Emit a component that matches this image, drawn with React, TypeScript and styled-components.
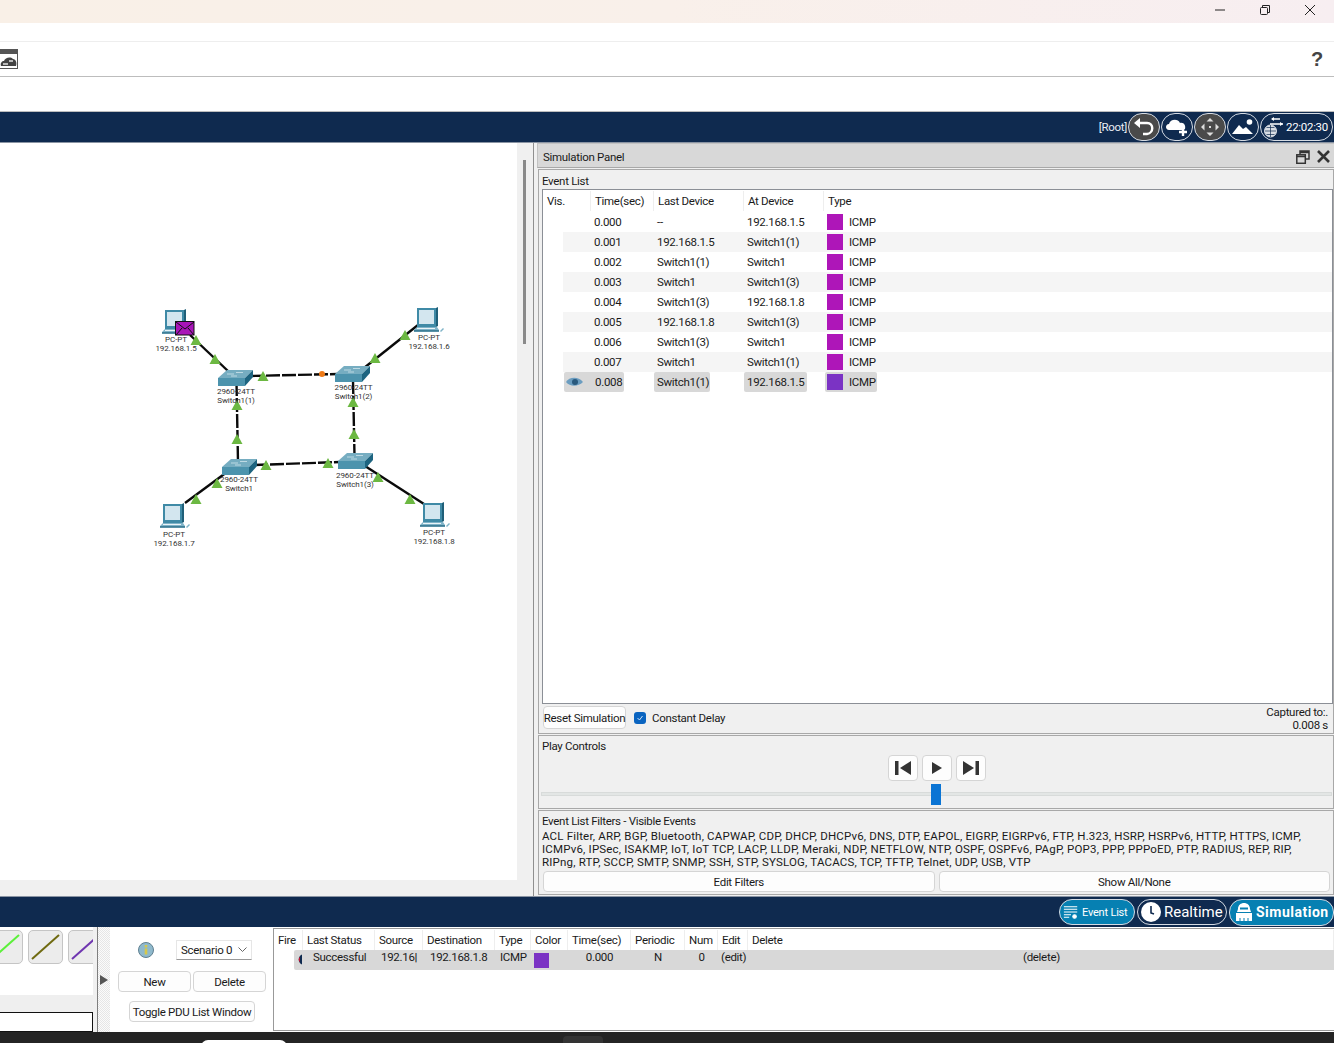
import React from "react";
import styled, { createGlobalStyle } from "styled-components";

const Global = createGlobalStyle`
  html, body { margin: 0; padding: 0; background: #fff; }
  body { font-family: Roboto, "Liberation Sans", Arial, sans-serif; font-size: 11.5px; letter-spacing: -.3px; color: #1a1a1a; overflow: hidden; }
  * { box-sizing: border-box; }
`;

const Page = styled.div`
  width: 1334px; height: 1043px; display: flex; flex-direction: column; overflow: hidden; background: #fff;
`;
const TitleBar = styled.div`
  height: 23px; flex: none; display: flex; justify-content: flex-end; align-items: center; padding: 0 18px 3px 0; gap: 33px;
  background: linear-gradient(90deg, #f9f0e7 0%, #f9f0ea 50%, #f7eef1 100%);
`;
const MenuGap = styled.div`height: 19px; flex: none; border-bottom: 1px solid #eeeeee;`;
const ToolRow = styled.div`
  height: 35px; flex: none; display: flex; justify-content: space-between; align-items: center; padding-right: 11px; border-bottom: 1px solid #bdbdbd;
`;
const CloudTool = styled.div`
  width: 18px; height: 20px; border: 1px solid #555; border-left: 0; border-top-width: 5px; background: #fff; display: flex; align-items: center;
`;
const Help = styled.span`font: bold 20px "Liberation Sans", sans-serif; color: #444;`;
const Spacer = styled.div`height: 35px; flex: none; border-bottom: 1px solid #bdbdbd;`;
const NavBar = styled.div`
  height: 31px; flex: none; background: #0f2a4f; display: flex; justify-content: flex-end; align-items: center; gap: 1px; padding-right: 1px;
  border-bottom: 1px solid #8a94a3; color: #fff;
`;
const RootText = styled.span`color: #e8edf3;`;
const RoundBtn = styled.div<{ $dark?: boolean }>`
  width: 32px; height: 28px; border-radius: 14px; border: 1px solid #d5dbe3; background: ${p => p.$dark ? "#4a4a4a" : "#0f2a4f"};
  display: flex; align-items: center; justify-content: center;
`;
const ClockBtn = styled(RoundBtn)`
  width: 73px; justify-content: flex-start; padding-left: 2px; color: #fff; gap: 1px;
`;

const Main = styled.div`flex: none; height: 753px; display: flex; background: #f0f0f0;`;
const Canvas = styled.div`width: 517px; height: 737px; position: relative; background: #fff; flex: none;`;
const Diagram = styled.svg`position: absolute; left: 0; top: 0;`;
const NodeLabel = styled.div<{ $x: number; $y: number }>`
  position: absolute; left: ${p => p.$x}px; top: ${p => p.$y - 143}px; transform: translateX(-50%);
  font-size: 8px; line-height: 9px; letter-spacing: -.1px; text-align: center; white-space: nowrap; color: #333;
`;
const VScroll = styled.div`width: 16px; flex: none; display: flex; justify-content: center; padding: 17px 1px 0 0; background: #f0f0f0;`;
const VThumb = styled.div`width: 3px; height: 184px; background: #8a8a8a;`;

const Panel = styled.div`width: 801px; flex: none; display: flex; flex-direction: column; border-left: 1px solid #8f8f8f; padding-left: 3px; background: #f0f0f0;`;
const PanelTitle = styled.div`
  height: 25px; flex: none; background: #d8d8d8; border: 1px solid #c2c2c2; border-bottom-color: #a8a8a8; border-right: 0; display: flex; align-items: center; justify-content: space-between; padding: 2px 4px 0 5px; margin-bottom: 1px;
`;
const TitleIcons = styled.div`display: flex; align-items: center; gap: 7px;`;
const Group = styled.div<{ $h: number }>`
  height: ${p => p.$h}px; margin: 0 0 1px 1px; flex: none; border: 1px solid #a8a8a8; background: #f0f0f0; display: flex; flex-direction: column;
`;
const GroupLabel = styled.div<{ $top: number }>`flex: none; padding: ${p => p.$top}px 0 0 3px; height: 19px; line-height: 13px;`;
const ListBox = styled.div`margin-left: 3px; height: 515px; border: 1px solid #8b8f96; background: #fff; flex: none;`;
const HeadRow = styled.div`
  height: 22px; display: grid; grid-template-columns: 48px 63px 90px 80px 1fr; align-items: center;
`;
const HeadCell = styled.div`
  height: 20px; line-height: 21px; padding-left: 4px; border-right: 1px solid #eeeeee;
  &:last-child { border-right: 0; }
`;
const EventRow = styled.div<{ $alt: boolean }>`
  height: 20px; margin-left: 20px; display: grid; grid-template-columns: 90px 90px 80px 1fr; background: ${p => p.$alt ? "#f5f5f5" : "#fff"};
`;
const ECell = styled.div`display: flex; align-items: center; padding-left: 4px; height: 20px;`;
const TypeCell = styled(ECell)`padding-left: 3px;`;
const TimeCell = styled(ECell)<{ $sel: boolean }>`padding-left: ${p => p.$sel ? 1 : 31}px;`;
const Pill = styled.div<{ $w: number }>`
  width: ${p => p.$w}px; height: 20px; background: #d8d8d8; border-radius: 2px; display: flex; align-items: center; padding-left: 3px; margin-left: -3px;
`;
const TimePill = styled(Pill)`margin-left: 0; padding-left: 2px; gap: 12px;`;
const TypeBox = styled.div<{ $sel?: boolean }>`
  display: flex; align-items: center; height: 20px; padding: 0 1px 0 ${p => p.$sel ? 2 : 1}px; margin-left: ${p => p.$sel ? -1 : 0}px; gap: 6px; background: ${p => p.$sel ? "#d8d8d8" : "transparent"}; border-radius: 2px;
`;
const Swatch = styled.span<{ $c: string; $s: number }>`width: ${p => p.$s}px; height: ${p => p.$s}px; background: ${p => p.$c}; flex: none; display: block;`;
const ListFoot = styled.div`flex: 1; display: flex; align-items: center; justify-content: space-between; padding: 0 5px 0 4px;`;
const FootLeft = styled.div`display: flex; align-items: center; padding-bottom: 2px;`;
const Btn = styled.div`
  background: #fdfdfd; border: 1px solid #d5d5d5; border-radius: 4px; display: flex; align-items: center; justify-content: center; white-space: nowrap; color: #1a1a1a;
`;
const ResetBtn = styled(Btn)`width: 83px; height: 23px; margin-right: 8px;`;
const Check = styled.div`
  width: 12px; height: 12px; border-radius: 3px; background: #0a64c0; margin-right: 6px; display: flex; align-items: center; justify-content: center;
`;
const Captured = styled.div`text-align: right; line-height: 13px;`;
const PlayRow = styled.div`display: flex; justify-content: center; gap: 4px; padding-left: 2px;`;
const PlayBtn = styled(Btn)`width: 30px; height: 26px;`;
const Slider = styled.div`margin: 11px 1px 0 2px; height: 4px; background: #e3e6e5; border: 1px solid #d8dbda; position: relative;`;
const Thumb = styled.div`position: absolute; left: 389px; top: -9px; width: 10px; height: 21px; background: #0a74d4;`;
const FilterText = styled.div`padding-left: 3px; line-height: 13px; white-space: nowrap; letter-spacing: .18px;`;
const FilterBtns = styled.div`display: flex; gap: 4px; padding: 2px 3px 0 4px;`;
const FilterBtn = styled(Btn)`flex: 1; height: 21px;`;

const ModeBar = styled.div`
  height: 31px; flex: none; background: #0f2a4f; border-top: 1px solid #8a94a3; display: flex; justify-content: flex-end; align-items: center; gap: 2px;
`;
const ModeBtn = styled.div<{ $w: number; $bg: string; $size: number; $bold?: boolean; $ls: number }>`
  width: ${p => p.$w}px; height: ${p => p.$bold ? 27 : 26}px; border-radius: 13px; border: 1px solid #d5dbe3; background: ${p => p.$bg}; color: #fff;
  font-size: ${p => p.$size}px; font-weight: ${p => p.$bold ? 700 : 400}; letter-spacing: ${p => p.$ls}px; display: flex; align-items: center; gap: ${p => p.$bold ? 1 : 3}px; padding-left: 3px; white-space: nowrap;
`;

const Bottom = styled.div`flex: none; display: flex; background: #fff; height: 105px;`;
const Tools = styled.div`width: 93px; flex: none; display: flex; flex-direction: column; overflow: hidden;`;
const CableRow = styled.div`height: 68px; flex: none; display: flex; gap: 5px; padding-top: 3px; margin-left: -12px;`;
const CableBtn = styled.div`
  width: 35px; height: 34px; flex: none; border-radius: 5px; border: 1px solid #c5c5c5; background: #ececec;
`;
const GrayStrip = styled.div`height: 17px; background: #efefef; flex: none;`;
const InputBox = styled.div`height: 20px; border: 1px solid #111; border-left: 0; background: #fff; flex: none;`;
const Divider = styled.div`width: 5px; flex: none; border-right: 1px solid #7e7e7e; background: #f0f0f0;`;
const Collapse = styled.div`
  width: 12px; flex: none; display: flex; align-items: center; justify-content: flex-start; padding-left: 2px;
  background: repeating-conic-gradient(#e6e6e6 0 25%, #fbfbfb 0 50%) 0 0 / 2px 2px;
`;
const Scenario = styled.div`width: 158px; flex: none; padding: 8px 7px 0 3px; background: #fff; margin-left: 5px;`;
const ScenTop = styled.div`display: flex; align-items: center; height: 30px; padding-left: 20px;`;
const Select = styled.div`
  margin-left: 22px; width: 76px; height: 20px; background: #fff; border: 1px solid #e6e6e6; border-bottom: 1px solid #999; display: flex; align-items: center; padding: 0 4px; justify-content: space-between;
`;
const ScenBtns = styled.div`display: flex; gap: 2px; margin-top: 6px;`;
const ScenBtn = styled(Btn)`width: 73px; height: 21px;`;
const ToggleBtn = styled(Btn)`width: 126px; height: 21px; margin: 9px 0 0 11px;`;
const PduBox = styled.div`flex: 1; margin-top: 1px; border: 1px solid #999; border-right: 0; height: 103px; background: #fff;`;
const PduHead = styled.div`
  display: grid; grid-template-columns: 29px 72px 48px 72px 36px 37px 63px 54px 33px 30px 1fr; height: 21px; align-items: center;
`;
const PduHeadCell = styled.div`height: 20px; line-height: 21px; padding-left: 4px; border-right: 1px solid #eeeeee; white-space: nowrap;`;
const PduRow = styled.div`
  margin-left: 20px; height: 20px; background: #d8d8d8; display: grid; grid-template-columns: 19px 68px 49px 70px 34px 34px 63px 54px 33px 30px 1fr; border-radius: 2px 0 0 2px;
`;
const PduCell = styled.div<{ $c?: boolean; $pl?: number }>`
  height: 14px; line-height: 14px; white-space: nowrap; overflow: hidden; text-align: ${p => p.$c ? "center" : "left"}; padding-left: ${p => p.$pl ?? 0}px;
`;
const FireCell = styled.div`padding: 4px 0 0 1px;`;
const SwatchCell = styled.div`padding-top: 3px;`;
const Taskbar = styled.div`height: 11px; flex: none; background: #242424; position: relative;`;
const TaskPill = styled.div`position: absolute; left: 201px; top: 8px; width: 86px; height: 14px; background: #fff; border-radius: 8px;`;
const TaskIcon = styled.div`position: absolute; left: 563px; top: 4px; width: 40px; height: 14px; background: #333; border-radius: 4px;`;

const events: [string, string, string][] = [
  ["0.000", "--", "192.168.1.5"],
  ["0.001", "192.168.1.5", "Switch1(1)"],
  ["0.002", "Switch1(1)", "Switch1"],
  ["0.003", "Switch1", "Switch1(3)"],
  ["0.004", "Switch1(3)", "192.168.1.8"],
  ["0.005", "192.168.1.8", "Switch1(3)"],
  ["0.006", "Switch1(3)", "Switch1"],
  ["0.007", "Switch1", "Switch1(1)"],
  ["0.008", "Switch1(1)", "192.168.1.5"],
];

const Pc = ({ x, y }: { x: number; y: number }) => (
  <g transform={`translate(${x} ${y})`}>
    <path d="M2 1h19v19H2z" fill="#3f8aa6" />
    <path d="M21 1l2-1v19l-2 1z" fill="#1f5f78" />
    <rect x="4" y="3" width="15" height="14" fill="#d3e6ef" />
    <path d="M2 20h20l2 3v1.500H-1V23z" fill="#7fb3c8" />
    <path d="M-1 23h25v1.800H-1z" fill="#3f7f98" />
    <path d="M2 21h18v1H2z" fill="#eaf4f8" />
    <path d="M25 24l3-3 1 1-3 3z" fill="#7fb3c8" />
  </g>
);
const Sw = ({ x, y }: { x: number; y: number }) => (
  <g transform={`translate(${x} ${y})`}>
    <path d="M0 9L9 1h26l-8 8z" fill="#76adc1" />
    <path d="M0 9h27v8H0z" fill="#4c93ad" />
    <path d="M27 9l8-8v7l-8 9z" fill="#1d6480" />
    <path d="M9 5h7M18 3.500h7M13 7h6" stroke="#cfe4ec" strokeWidth=".8" />
  </g>
);
const Tri = ({ x, y }: { x: number; y: number }) => (
  <path d={`M${x} ${y - 5}l5.500 10h-11z`} fill="#6cb842" />
);

const Network = () => (
  <Diagram width="517" height="737" viewBox="0 143 517 737">
    <g stroke="#0a0a0a" strokeWidth="2.400" fill="none">
      <path d="M190 335L228 371" />
      <path d="M418 325L364 368" />
      <path d="M185 503L227 472" />
      <path d="M365 466L424 504" />
      <path d="M250 376L338 374" strokeDasharray="14 2" />
      <path d="M254 465L340 462" strokeDasharray="14 2" />
      <path d="M236.500 382L238 462" strokeDasharray="14 2" />
      <path d="M353 380L354.500 456" strokeDasharray="14 2" />
    </g>
    <Pc x={163} y={309} />
    <Pc x={415} y={307} />
    <Pc x={161} y={503} />
    <Pc x={421} y={502} />
    <Sw x={218} y={369} />
    <Sw x={335} y={365} />
    <Sw x={222} y={458} />
    <Sw x={338} y={452} />
    <rect x="175.500" y="321.500" width="18.500" height="13.500" fill="#a815b8" stroke="#111" />
    <path d="M176 322l9 7 9-7M176 335l6-7M194 335l-6-7" stroke="#111" fill="none" strokeWidth="1" />
    {[[196,340],[215,359],[263,376],[405,335],[375,358],[237,405],[353,402],[237,439],[354,434],[266,465],[328,463],[196,499],[217,483],[378,477],[410,499]].map(([x, y]) => <Tri key={`${x}-${y}`} x={x} y={y} />)}
    <circle cx="322" cy="374" r="3" fill="#ee7a17" />
  </Diagram>
);

const labels: [number, number, string, string][] = [
  [176, 335, "PC-PT", "192.168.1.5"],
  [429, 333, "PC-PT", "192.168.1.6"],
  [236, 387, "2960-24TT", "Switch1(1)"],
  [353.500, 383, "2960-24TT", "Switch1(2)"],
  [239, 475, "2960-24TT", "Switch1"],
  [355, 471, "2960-24TT", "Switch1(3)"],
  [174, 530, "PC-PT", "192.168.1.7"],
  [434, 528, "PC-PT", "192.168.1.8"],
];

export default function App() {
  return (
    <Page>
      <Global />
      <TitleBar>
        <svg width="12" height="12" viewBox="0 0 12 12"><path d="M1 6h10" stroke="#222" /></svg>
        <svg width="12" height="12" viewBox="0 0 12 12" fill="none" stroke="#222"><rect x="1.500" y="3.500" width="7" height="7" rx="1" /><path d="M3.500 3V1.500h7v7H9" /></svg>
        <svg width="12" height="12" viewBox="0 0 12 12"><path d="M1 1l10 10M11 1L1 11" stroke="#222" /></svg>
      </TitleBar>
      <MenuGap />
      <ToolRow>
        <CloudTool>
          <svg width="17" height="12" viewBox="0 0 17 12"><path d="M1 11c-1-3 1-5 3-5 1-3 6-5 9-2 3 0 4 4 3 7z" fill="#444" /><path d="M3 9h5M9 6h4" stroke="#bbb" strokeWidth="2" /></svg>
        </CloudTool>
        <Help>?</Help>
      </ToolRow>
      <Spacer />
      <NavBar>
        <RootText>[Root]</RootText>
        <RoundBtn $dark>
          <svg width="24" height="22" viewBox="0 0 24 22" fill="none"><path d="M8 2L2 7l6 5z" fill="#fff" /><path d="M6 7h9c7 0 7 10 0 11h-4" stroke="#fff" strokeWidth="2.400" /></svg>
        </RoundBtn>
        <RoundBtn>
          <svg width="24" height="22" viewBox="0 0 24 22"><path d="M4 14c-4 0-4-6 0-6 1-5 9-6 11-1 4-1 6 3 5 6l-2 1z" fill="#fff" /><path d="M18 12v8M14 16h8" stroke="#fff" strokeWidth="2.400" /></svg>
        </RoundBtn>
        <RoundBtn $dark>
          <svg width="22" height="22" viewBox="0 0 22 22" fill="#ddd"><path d="M11 2l3.500 3.500h-7zM11 20l-3.500-3.500h7zM2 11l3.500-3.500v7zM20 11l-3.500 3.500v-7z" /><rect x="10" y="10" width="2" height="2" /></svg>
        </RoundBtn>
        <RoundBtn>
          <svg width="24" height="20" viewBox="0 0 24 20" fill="#fff"><circle cx="18.500" cy="5" r="2.800" /><path d="M1 17l7-9 4 4 3-2 7 7z" /></svg>
        </RoundBtn>
        <ClockBtn>
          <svg width="22" height="24" viewBox="0 0 22 24" fill="none" stroke="#fff"><circle cx="7.500" cy="16" r="6" fill="#d8dde4" stroke="#d8dde4" /><path d="M2 16h11M7.500 10v12M3.500 12.500h8M3.500 19.500h8" stroke="#0f2a4f" strokeWidth=".7" /><path d="M9 4h8M7 9h13" strokeWidth="1.500" /><path d="M11 2L8 4l3 2zM17 7l3 2-3 2z" fill="#fff" stroke="none" /></svg>
          <span>22:02:30</span>
        </ClockBtn>
      </NavBar>
      <Main>
        <div>
          <Canvas>
            <Network />
            {labels.map(([x, y, a, b]) => (
              <NodeLabel key={b} $x={x} $y={y}>{a}<br />{b}</NodeLabel>
            ))}
          </Canvas>
        </div>
        <VScroll><VThumb /></VScroll>
        <Panel>
          <PanelTitle>
            <span>Simulation Panel</span>
            <TitleIcons>
              <svg width="14" height="14" viewBox="0 0 14 14" fill="none" stroke="#333" strokeWidth="1.500"><rect x=".8" y="4.800" width="8.500" height="8.500" /><path d="M4 4.500V1h9v8h-3.500M4 2.500h9" /><path d="M.8 6.500h8.500" /></svg>
              <svg width="13" height="13" viewBox="0 0 13 13"><path d="M1 1l11 11M12 1L1 12" stroke="#333" strokeWidth="2.600" /></svg>
            </TitleIcons>
          </PanelTitle>
          <Group $h={565}>
            <GroupLabel $top={5}>Event List</GroupLabel>
            <ListBox>
              <HeadRow>
                <HeadCell>Vis.</HeadCell>
                <HeadCell>Time(sec)</HeadCell>
                <HeadCell>Last Device</HeadCell>
                <HeadCell>At Device</HeadCell>
                <HeadCell>Type</HeadCell>
              </HeadRow>
              {events.map(([t, l, a], i) => {
                const sel = i === 8;
                return (
                  <EventRow key={t} $alt={i % 2 === 1}>
                    <TimeCell $sel={sel}>
                      {sel ? (
                        <TimePill $w={60}>
                          <svg width="17" height="10" viewBox="0 0 17 10"><path d="M0 5C3 0 12-1 17 5 12 10 4 10 0 5z" fill="#6b9dc0" /><circle cx="9" cy="5" r="3" fill="#29597d" /></svg>
                          <span>{t}</span>
                        </TimePill>
                      ) : t}
                    </TimeCell>
                    <ECell>{sel ? <Pill $w={56}>{l}</Pill> : l}</ECell>
                    <ECell>{sel ? <Pill $w={63}>{a}</Pill> : a}</ECell>
                    <TypeCell>
                      <TypeBox $sel={sel}>
                        <Swatch $c={sel ? "#7b33c4" : "#ae16b8"} $s={16} />
                        <span>ICMP</span>
                      </TypeBox>
                    </TypeCell>
                  </EventRow>
                );
              })}
            </ListBox>
            <ListFoot>
              <FootLeft>
                <ResetBtn>Reset Simulation</ResetBtn>
                <Check><svg width="8" height="8" viewBox="0 0 8 8"><path d="M1.500 4l2 2 3-4" stroke="#cfe3f7" fill="none" /></svg></Check>
                <span>Constant Delay</span>
              </FootLeft>
              <Captured>Captured to:.<br />0.008 s</Captured>
            </ListFoot>
          </Group>
          <Group $h={74}>
            <GroupLabel $top={4}>Play Controls</GroupLabel>
            <PlayRow>
              <PlayBtn><svg width="16" height="14" viewBox="0 0 16 14" fill="#333"><rect x="0" y="0" width="3.500" height="14" /><path d="M16 0v14L5 7z" /></svg></PlayBtn>
              <PlayBtn><svg width="12" height="12" viewBox="0 0 12 12" fill="#333"><path d="M1 0l10 6-10 6z" /></svg></PlayBtn>
              <PlayBtn><svg width="16" height="14" viewBox="0 0 16 14" fill="#333"><path d="M0 0v14L11 7z" /><rect x="12.500" y="0" width="3.500" height="14" /></svg></PlayBtn>
            </PlayRow>
            <Slider><Thumb /></Slider>
          </Group>
          <Group $h={85}>
            <GroupLabel $top={4}>Event List Filters - Visible Events</GroupLabel>
            <FilterText>
              ACL Filter, ARP, BGP, Bluetooth, CAPWAP, CDP, DHCP, DHCPv6, DNS, DTP, EAPOL, EIGRP, EIGRPv6, FTP, H.323, HSRP, HSRPv6, HTTP, HTTPS, ICMP,<br />
              ICMPv6, IPSec, ISAKMP, IoT, IoT TCP, LACP, LLDP, Meraki, NDP, NETFLOW, NTP, OSPF, OSPFv6, PAgP, POP3, PPP, PPPoED, PTP, RADIUS, REP, RIP,<br />
              RIPng, RTP, SCCP, SMTP, SNMP, SSH, STP, SYSLOG, TACACS, TCP, TFTP, Telnet, UDP, USB, VTP
            </FilterText>
            <FilterBtns>
              <FilterBtn>Edit Filters</FilterBtn>
              <FilterBtn>Show All/None</FilterBtn>
            </FilterBtns>
          </Group>
        </Panel>
      </Main>
      <ModeBar>
        <ModeBtn $w={76} $bg="#0680b2" $size={11} $ls={-0.2}>
          <svg width="16" height="16" viewBox="0 0 18 16" stroke="#fff" strokeWidth="1.200"><path d="M1 2h15M1 5h15M1 8h15M1 11h8M1 14h6" /><circle cx="13" cy="13" r="2" fill="#fff" /></svg>
          <span>Event List</span>
        </ModeBtn>
        <ModeBtn $w={90} $bg="#0f2a4f" $size={15} $ls={0}>
          <svg width="20" height="20" viewBox="0 0 20 20"><circle cx="10" cy="10" r="10" fill="#fff" /><path d="M10 4v7l3 1" stroke="#0f2a4f" strokeWidth="1.600" fill="none" /></svg>
          <span>Realtime</span>
        </ModeBtn>
        <ModeBtn $w={105} $bg="#0680b2" $size={14} $bold $ls={0.5}>
          <svg width="22" height="22" viewBox="0 0 22 22" fill="#fff"><path d="M5 8c0-8 12-8 12 0l1 3H4z" /><path d="M3 12h16v8H3z" /><path d="M7 6.500h8v2H7z" fill="#0680b2" /><path d="M7 20v-3M11 20v-3M15 20v-3" stroke="#0680b2" /></svg>
          <span>Simulation</span>
        </ModeBtn>
      </ModeBar>
      <Bottom>
        <Tools>
          <CableRow>
            <CableBtn><svg width="33" height="32" viewBox="0 0 33 32"><path d="M3 28L30 4" stroke="#5cf03a" strokeWidth="2" /></svg></CableBtn>
            <CableBtn><svg width="33" height="32" viewBox="0 0 33 32"><path d="M3 28L30 4" stroke="#6f6a10" strokeWidth="2" /></svg></CableBtn>
            <CableBtn><svg width="33" height="32" viewBox="0 0 33 32"><path d="M3 28L30 4" stroke="#6f35b0" strokeWidth="2" /></svg></CableBtn>
          </CableRow>
          <GrayStrip />
          <InputBox />
        </Tools>
        <Divider />
        <Collapse><svg width="8" height="12" viewBox="0 0 8 12"><path d="M0 1l8 5-8 5z" fill="#555" /></svg></Collapse>
        <Scenario>
          <ScenTop>
            <svg width="16" height="16" viewBox="0 0 16 16"><circle cx="8" cy="8" r="7.500" fill="#8fb9cc" stroke="#5f7f90" /><rect x="6.700" y="6.500" width="2.600" height="6" fill="#d6c84a" /><rect x="6.700" y="3" width="2.600" height="2.400" fill="#d6c84a" /></svg>
            <Select><span>Scenario 0</span><svg width="9" height="6" viewBox="0 0 9 6"><path d="M.5 .5L4.500 4.500 8.500 .5" stroke="#666" fill="none" /></svg></Select>
          </ScenTop>
          <ScenBtns><ScenBtn>New</ScenBtn><ScenBtn>Delete</ScenBtn></ScenBtns>
          <ToggleBtn>Toggle PDU List Window</ToggleBtn>
        </Scenario>
        <PduBox>
          <PduHead>
            {["Fire", "Last Status", "Source", "Destination", "Type", "Color", "Time(sec)", "Periodic", "Num", "Edit", "Delete"].map(h => <PduHeadCell key={h}>{h}</PduHeadCell>)}
          </PduHead>
          <PduRow>
            <FireCell><svg width="8" height="11" viewBox="0 0 8 11"><path d="M7 .5A5.500 5.500 0 0 0 7 10.500z" fill="#0f2a4f" /><path d="M5 3A3 3 0 0 0 5 8z" fill="#c01030" /></svg></FireCell>
            <PduCell>Successful</PduCell>
            <PduCell>192.16<b>|</b></PduCell>
            <PduCell>192.168.1.8</PduCell>
            <PduCell>ICMP</PduCell>
            <SwatchCell><Swatch $c="#7b33c4" $s={15} /></SwatchCell>
            <PduCell $c>0.000</PduCell>
            <PduCell $c>N</PduCell>
            <PduCell $c>0</PduCell>
            <PduCell $pl={3}>(edit)</PduCell>
            <PduCell $pl={275}>(delete)</PduCell>
          </PduRow>
        </PduBox>
      </Bottom>
      <Taskbar><TaskPill /><TaskIcon /></Taskbar>
    </Page>
  );
}
